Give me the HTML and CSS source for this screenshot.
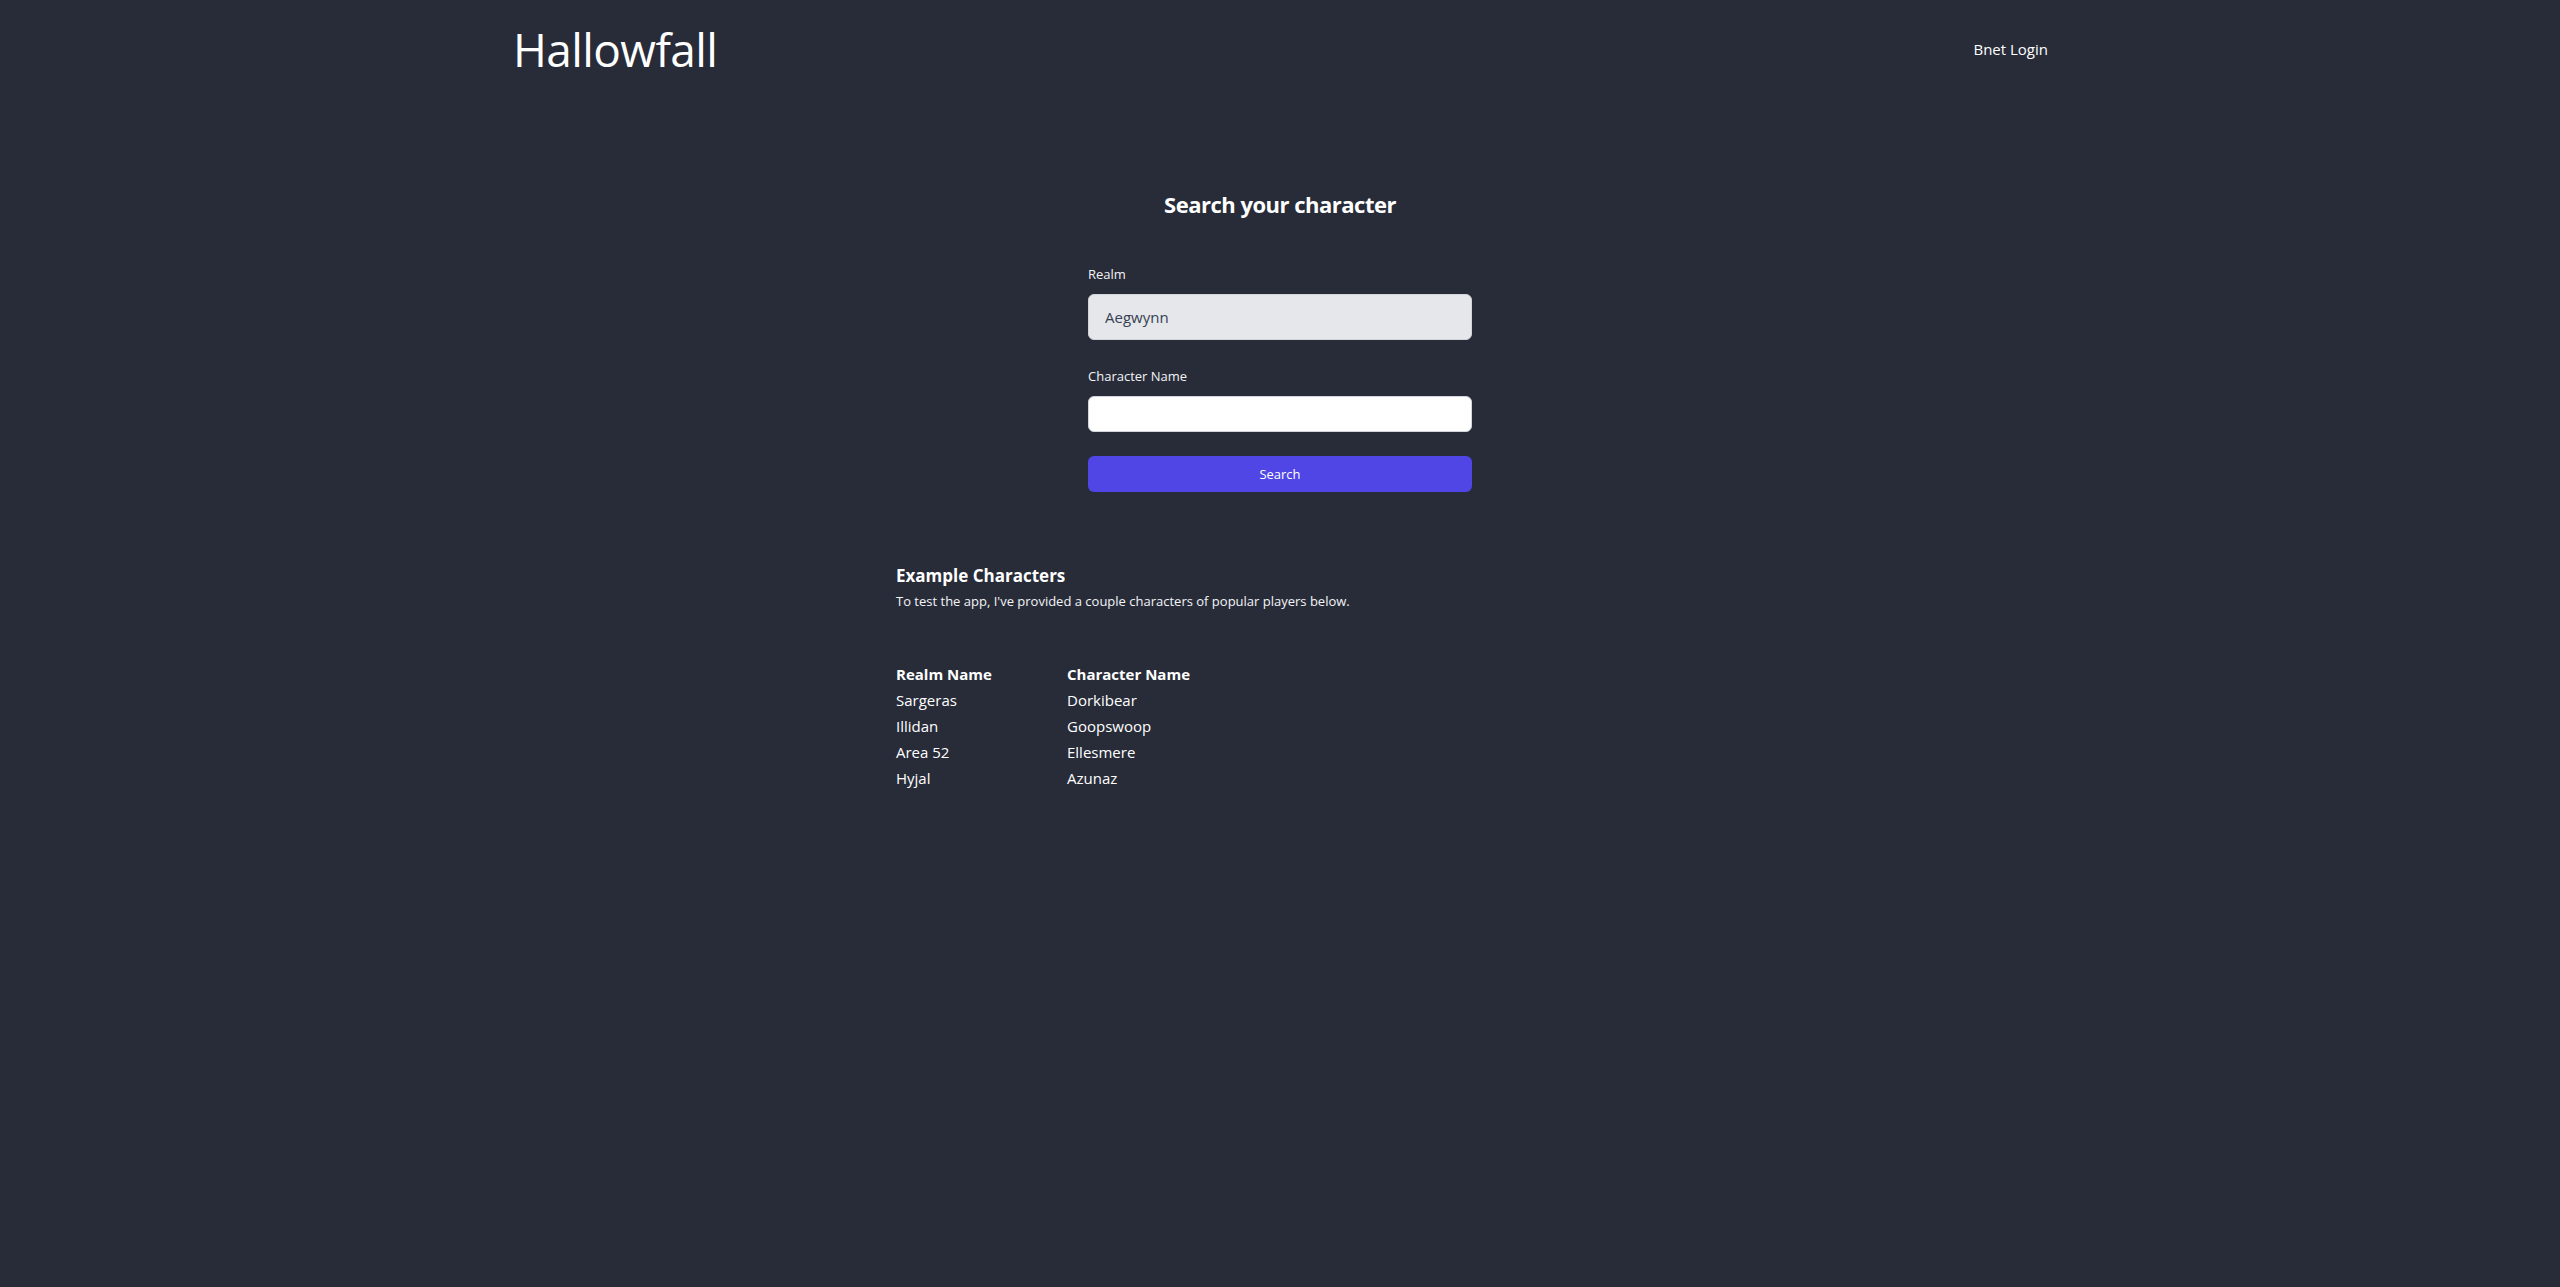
FILE: index.html
```html
<!DOCTYPE html>
<html lang="en">
<head>
<meta charset="utf-8">
<title>Hallowfall</title>
<link rel="stylesheet" href="styles.css">
</head>
<body>
<header class="site-header">
  <a class="brand" href="#">Hallowfall</a>
  <a class="nav-link" href="#">Bnet Login</a>
</header>
<main class="main">
  <section class="search">
    <h1 class="search-title">Search your character</h1>
    <form class="search-form">
      <label class="field-label" for="realm">Realm</label>
      <input class="field field-realm" id="realm" type="text" value="Aegwynn" readonly>
      <label class="field-label field-label-second" for="charname">Character Name</label>
      <input class="field field-name" id="charname" type="text">
      <button class="search-btn" type="button">Search</button>
    </form>
  </section>
  <section class="examples">
    <h2 class="examples-title">Example Characters</h2>
    <p class="examples-desc">To test the app, I've provided a couple characters of popular players below.</p>
    <div class="examples-table">
      <div class="cell head">Realm Name</div>
      <div class="cell head">Character Name</div>
      <div class="cell">Sargeras</div>
      <div class="cell">Dorkibear</div>
      <div class="cell">Illidan</div>
      <div class="cell">Goopswoop</div>
      <div class="cell">Area 52</div>
      <div class="cell">Ellesmere</div>
      <div class="cell">Hyjal</div>
      <div class="cell">Azunaz</div>
    </div>
  </section>
</main>
</body>
</html>
```
FILE: styles.css
```css
* { box-sizing: border-box; }
html, body {
  margin: 0;
  padding: 0;
  background: #282c39;
  color: #ffffff;
  font-family: "Open Sans", "Noto Sans", sans-serif;
  min-height: 100%;
}
body { min-height: 1287px; }
a { color: inherit; text-decoration: none; }

.site-header {
  width: 1536px;
  margin: 0 auto;
  padding-top: 23px;
  display: flex;
  align-items: center;
  justify-content: space-between;
}
.brand {
  font-size: 46px;
  line-height: 48px;
  letter-spacing: -0.6px;
  font-weight: 400;
  padding-left: 1px;
  padding-top: 2px;
}
.nav-link {
  font-size: 15px;
  line-height: 24px;
  padding-top: 2px;
}

.main {
  display: flex;
  flex-direction: column;
  align-items: center;
}
.search {
  width: 384px;
  display: flex;
  flex-direction: column;
  padding-top: 115px;
}
.search-title {
  margin: 0 0 44px;
  font-size: 22px;
  line-height: 32px;
  letter-spacing: -0.5px;
  font-weight: 700;
  text-align: center;
}
.search-form {
  display: flex;
  flex-direction: column;
}
.field-label {
  font-size: 13px;
  line-height: 20px;
  margin-bottom: 10px;
  color: #f3f4f6;
}
.field-label-second { margin-top: 26px; }
.field {
  width: 100%;
  border: 1px solid #d1d5db;
  border-radius: 6px;
  font-family: inherit;
  font-size: 15px;
  padding: 0 16px;
  outline: none;
}
.field-realm {
  height: 46px;
  background: #e5e7eb;
  color: #374151;
}
.field-name {
  height: 36px;
  background: #ffffff;
  color: #111827;
}
.search-btn {
  margin-top: 24px;
  height: 36px;
  width: 100%;
  border: none;
  border-radius: 6px;
  background: #4f46e5;
  color: #ffffff;
  font-family: inherit;
  font-size: 13px;
  font-weight: 500;
}

.examples {
  width: 768px;
  padding-top: 72px;
}
.examples-title {
  margin: 0 0 3px;
  font-size: 17px;
  line-height: 24px;
  font-weight: 700;
}
.examples-desc {
  margin: 0;
  font-size: 13px;
  line-height: 20px;
  color: #f3f4f6;
}
.examples-table {
  margin-top: 50px;
  display: grid;
  grid-template-columns: 171px auto;
  justify-content: start;
}
.cell {
  font-size: 15px;
  line-height: 26px;
}
.cell.head { font-weight: 700; }
```
